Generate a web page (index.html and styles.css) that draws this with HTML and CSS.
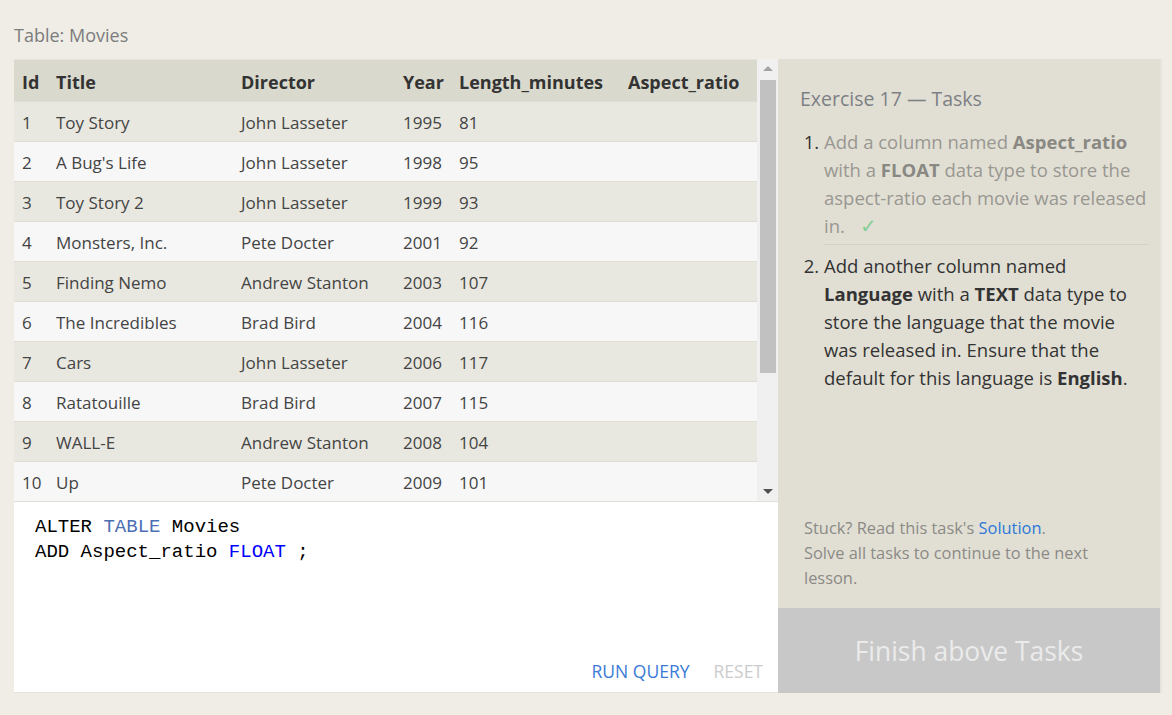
FILE: index.html
```html
<!DOCTYPE html>
<html>
<head>
<meta charset="utf-8">
<link rel="stylesheet" href="styles.css">
</head>
<body>
<div class="page">
  <div class="caption">Table: Movies</div>
  <div class="workspace">
    <div class="left">
      <div class="table-wrap">
        <div class="table">
          <div class="row head"><div>Id</div><div>Title</div><div>Director</div><div>Year</div><div>Length_minutes</div><div>Aspect_ratio</div></div>
          <div class="row odd"><div>1</div><div>Toy Story</div><div>John Lasseter</div><div>1995</div><div>81</div><div></div></div>
          <div class="row even"><div>2</div><div>A Bug's Life</div><div>John Lasseter</div><div>1998</div><div>95</div><div></div></div>
          <div class="row odd"><div>3</div><div>Toy Story 2</div><div>John Lasseter</div><div>1999</div><div>93</div><div></div></div>
          <div class="row even"><div>4</div><div>Monsters, Inc.</div><div>Pete Docter</div><div>2001</div><div>92</div><div></div></div>
          <div class="row odd"><div>5</div><div>Finding Nemo</div><div>Andrew Stanton</div><div>2003</div><div>107</div><div></div></div>
          <div class="row even"><div>6</div><div>The Incredibles</div><div>Brad Bird</div><div>2004</div><div>116</div><div></div></div>
          <div class="row odd"><div>7</div><div>Cars</div><div>John Lasseter</div><div>2006</div><div>117</div><div></div></div>
          <div class="row even"><div>8</div><div>Ratatouille</div><div>Brad Bird</div><div>2007</div><div>115</div><div></div></div>
          <div class="row odd"><div>9</div><div>WALL-E</div><div>Andrew Stanton</div><div>2008</div><div>104</div><div></div></div>
          <div class="row even"><div>10</div><div>Up</div><div>Pete Docter</div><div>2009</div><div>101</div><div></div></div>
        </div>
        <div class="scrollbar">
          <div class="arrow up"></div>
          <div class="track"><div class="thumb"></div></div>
          <div class="arrow down"></div>
        </div>
      </div>
      <div class="editor">
        <div class="code">
          <div class="line">ALTER <span class="kw">TABLE</span> Movies</div>
          <div class="line">ADD Aspect_ratio <span class="type">FLOAT</span> ;</div>
        </div>
        <div class="actions">
          <span class="run">RUN QUERY</span>
          <span class="reset">RESET</span>
        </div>
      </div>
    </div>
    <div class="right">
      <div class="tasks">
        <div class="tasks-title">Exercise 17 — Tasks</div>
        <ol class="task-list">
          <li class="done">Add a column named <b>Aspect_ratio</b> with a <b>FLOAT</b> data type to store the aspect-ratio each movie was released in. <span class="check">✓</span></li>
          <li class="todo">Add another column named <b>Language</b> with a <b>TEXT</b> data type to store the language that the movie was released in. Ensure that the default for this language is <b>English</b>.</li>
        </ol>
        <div class="hint">
          <div>Stuck? Read this task's <span class="link">Solution</span>.</div>
          <div>Solve all tasks to continue to the next lesson.</div>
        </div>
      </div>
      <div class="finish">Finish above Tasks</div>
    </div>
  </div>
</div>
</body>
</html>
```
FILE: styles.css
```css
html, body {
  margin: 0;
  padding: 0;
  background: #efede5;
  font-family: "Open Sans", "Noto Sans", sans-serif;
}
.page {
  padding: 22px 10px 22px 14px;
}
.caption {
  font-size: 18px;
  line-height: 26px;
  color: #7c7c7c;
  margin-bottom: 11px;
}
.workspace {
  display: flex;
  height: 634px;
}
.left {
  width: 764px;
  display: flex;
  flex-direction: column;
  background: #fff;
  border-bottom: 1px solid #e4e2da;
}
.table-wrap {
  display: flex;
  height: 443px;
  border-bottom: 1px solid #e2e0d8;
  box-sizing: border-box;
}
.table {
  flex: 1;
  font-size: 17px;
  color: #444;
}
.row {
  display: grid;
  grid-template-columns: 34px 185px 162px 56px 169px 1fr;
  height: 40px;
  align-items: center;
  border-top: 1px solid #dedcd3;
  box-sizing: border-box;
  padding-top: 2px;
}
.row > div {
  padding-left: 8px;
  white-space: nowrap;
}
.row.head {
  height: 42px;
  background: #dad9cd;
  font-weight: 700;
  color: #333;
  font-size: 18px;
  border-top: 1px solid #e6e4dc;
  padding-top: 3px;
}
.row.odd { background: #e9e8e0; }
.row.even { background: #f7f7f7; }
.scrollbar {
  width: 21px;
  background: #f0f0f0;
  display: flex;
  flex-direction: column;
  align-items: center;
}
.arrow {
  width: 0;
  height: 0;
  border-left: 5px solid transparent;
  border-right: 5px solid transparent;
}
.arrow.up {
  border-bottom: 5px solid #a3a3a3;
  margin: 7px 0 9px;
}
.arrow.down {
  border-top: 5px solid #505050;
  margin: 9px 0 7px;
}
.track {
  flex: 1;
  width: 17px;
}
.thumb {
  height: 293px;
  background: #c1c1c1;
  margin-left: 1px;
}
.editor {
  flex: 1;
  display: flex;
  flex-direction: column;
  background: #fff;
  min-height: 0;
}
.code {
  padding: 13px 21px 0;
  font-family: "Liberation Mono", "DejaVu Sans Mono", monospace;
  font-size: 19px;
  line-height: 25px;
  color: #000;
  flex: 1;
}
.line { white-space: pre; }
.kw { color: #4c6eb4; }
.type { color: #0000ff; }
.actions {
  display: flex;
  justify-content: flex-end;
  gap: 24px;
  padding: 0 15px 9px 0;
  font-size: 17.5px;
  line-height: 24px;
}
.run { color: #3b7ad6; }
.reset { color: #cccccc; }
.right {
  width: 382px;
  display: flex;
  flex-direction: column;
  border-right: 2px solid #e6e4db;
}
.tasks {
  flex: 1;
  background: #e1dfd4;
  padding: 27px 11px 0 22px;
  display: flex;
  flex-direction: column;
}
.tasks-title {
  font-size: 19.5px;
  line-height: 26px;
  color: #7d8085;
  margin-bottom: 16px;
}
.task-list {
  margin: 0;
  padding-left: 24px;
  font-size: 18.5px;
  line-height: 28px;
}
.task-list li.done {
  color: #999791;
  border-bottom: 1px solid #d4d2c8;
  padding-bottom: 4px;
  margin-bottom: 7px;
}
.task-list li.done::marker { color: #333; }
.task-list li.done b { color: #8a8882; }
.task-list li.todo { color: #333; }
.check {
  color: #86cf96;
  margin-left: 10px;
  font-size: 20px;
}
.hint {
  margin-top: auto;
  padding: 0 0 18px 4px;
  max-width: 300px;
  font-size: 16.4px;
  line-height: 25px;
  color: #8c8a86;
}
.link { color: #2b78d8; }
.finish {
  height: 85px;
  background: #c8c8c8;
  color: #ebebeb;
  font-size: 26.4px;
  display: flex;
  align-items: center;
  justify-content: center;
}
```
